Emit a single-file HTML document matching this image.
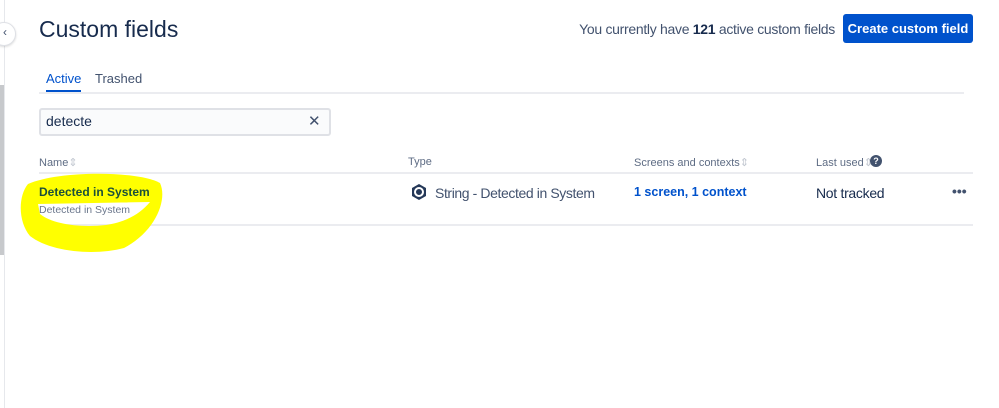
<!DOCTYPE html>
<html><head><meta charset="utf-8"><style>
*{box-sizing:border-box;margin:0;padding:0}
body{width:999px;height:408px;background:#fff;font-family:"Liberation Sans",sans-serif;color:#172b4d;position:relative;overflow:hidden}
.a{position:absolute;white-space:nowrap}
</style></head><body>
<div class="a" style="left:4px;top:0;width:1px;height:408px;background:#e6e8ec"></div>
<div class="a" style="left:0;top:85px;width:4px;height:170px;background:#c7c9cc"></div>
<div class="a" style="left:-8px;top:22px;width:24px;height:24px;border-radius:50%;background:#fff;border:1px solid #dfe1e6;box-shadow:0 1px 2px rgba(0,0,0,.15)"></div>
<div class="a" style="left:3px;top:25px;font-size:12px;color:#42526e">‹</div>
<div class="a" style="left:39px;top:16px;font-size:23px;color:#172b4d">Custom fields</div>
<div class="a" style="right:164px;top:21px;font-size:14px;letter-spacing:-0.3px;color:#42526e">You currently have <b style="color:#172b4d">121</b> active custom fields</div>
<div class="a" style="left:843px;top:14px;width:130px;height:29px;background:#0052cc;border-radius:3px;color:#fff;font-size:13px;font-weight:bold;text-align:center;line-height:29px">Create custom field</div>
<div class="a" style="left:39px;top:92px;width:925px;height:2px;background:#ebecf0"></div>
<div class="a" style="left:46px;top:71px;font-size:13px;color:#0052cc">Active</div>
<div class="a" style="left:46px;top:90px;width:35px;height:2px;background:#0052cc"></div>
<div class="a" style="left:95px;top:71px;font-size:13px;color:#42526e">Trashed</div>
<div class="a" style="left:39px;top:108px;width:292px;height:28px;border:2px solid #dfe1e6;border-radius:3px;background:#fafbfc"></div>
<div class="a" style="left:46px;top:113px;font-size:14px;color:#172b4d">detecte</div>
<div class="a" style="left:308px;top:112px;font-size:15px;color:#42526e">✕</div>
<div class="a" style="left:39px;top:156px;font-size:11px;color:#5e6c84">Name<span style="color:#c1c7d0">⇕</span></div>
<div class="a" style="left:408px;top:156px;font-size:11px;color:#5e6c84">Type</div>
<div class="a" style="left:634px;top:156px;font-size:11px;color:#5e6c84">Screens and contexts<span style="color:#c1c7d0">⇕</span></div>
<div class="a" style="left:816px;top:156px;font-size:11px;color:#5e6c84">Last used<span style="color:#c1c7d0">⇕</span></div>
<div class="a" style="left:870px;top:155px;width:12px;height:12px;border-radius:50%;background:#42526e;color:#fff;font-size:9px;font-weight:bold;text-align:center;line-height:12px">?</div>
<div class="a" style="left:39px;top:172px;width:934px;height:2px;background:#ebecf0"></div>
<div class="a" style="left:39px;top:224px;width:934px;height:2px;background:#ebecf0"></div>
<svg class="a" style="left:0;top:0" width="200" height="270"><path fill="#ffff00" fill-rule="evenodd" d="M28,184 C60,170 140,171 160,183 C168,200 155,232 124,248 C95,256 50,252 30,236 C18,222 18,196 28,184 Z M38,204 L150,202 C140,214 126,222 106,225 C80,228 52,224 40,214 Z"/></svg>
<div class="a" style="left:39px;top:185px;font-size:12px;font-weight:bold;color:#1b4f3a">Detected in System</div>
<div class="a" style="left:39px;top:204px;font-size:10.5px;color:#6b778c">Detected in System</div>
<svg class="a" style="left:411px;top:183px" width="16" height="18" viewBox="0 0 16 18"><path d="M8 1 L15 5 L15 13 L8 17 L1 13 L1 5 Z" fill="#253858"/><circle cx="8" cy="9" r="4" fill="none" stroke="#fff" stroke-width="2"/></svg>
<div class="a" style="left:435px;top:185px;font-size:14px;letter-spacing:-0.4px;color:#42526e">String - Detected in System</div>
<div class="a" style="left:634px;top:185px;font-size:12.5px;font-weight:bold;color:#0052cc">1 screen, 1 context</div>
<div class="a" style="left:816px;top:185px;font-size:14px;letter-spacing:-0.3px;color:#172b4d">Not tracked</div>
<div class="a" style="left:952px;top:183px;font-size:14px;font-weight:bold;color:#42526e">•••</div>
</body></html>
